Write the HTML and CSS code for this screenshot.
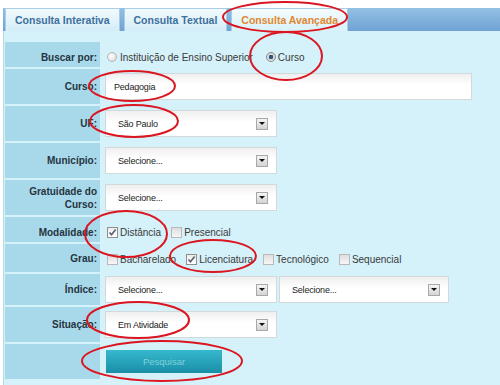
FILE: index.html
```html
<!DOCTYPE html>
<html lang="pt-BR">

<head>
  <meta charset="UTF-8" />
  <title>Consulta Avançada</title>
  <link rel="stylesheet" href="styles.css">
</head>

<body>
  <div class="page">
    <ul class="tabs">
      <li class="tab">Consulta Interativa</li>
      <li class="tab">Consulta Textual</li>
      <li class="tab tab-active">Consulta Avançada</li>
    </ul>

    <form class="panel">
      <div class="row row-low">
        <div class="label">Buscar por:</div>
        <div class="field field-opts">
          <span class="opt opt-wide"><span class="radio"></span>Instituição de Ensino Superior</span>
          <span class="opt"><span class="radio radio-on"></span>Curso</span>
        </div>
      </div>

      <div class="row">
        <div class="label">Curso:</div>
        <div class="field">
          <input class="input" type="text" value="Pedagogia" />
        </div>
      </div>

      <div class="row">
        <div class="label">UF:</div>
        <div class="field">
          <div class="select"><span>São Paulo</span><span class="select-arrow"></span></div>
        </div>
      </div>

      <div class="row">
        <div class="label">Município:</div>
        <div class="field">
          <div class="select"><span>Selecione...</span><span class="select-arrow"></span></div>
        </div>
      </div>

      <div class="row">
        <div class="label">Gratuidade do Curso:</div>
        <div class="field">
          <div class="select"><span>Selecione...</span><span class="select-arrow"></span></div>
        </div>
      </div>

      <div class="row row-low">
        <div class="label">Modalidade:</div>
        <div class="field field-opts">
          <span class="opt"><span class="check check-on"><svg viewBox="0 0 9 9"><path d="M1.5 4.5 L3.5 6.8 L7.6 1.6" /></svg></span>Distância</span>
          <span class="opt"><span class="check"></span>Presencial</span>
        </div>
      </div>

      <div class="row">
        <div class="label">Grau:</div>
        <div class="field field-opts field-grau">
          <span class="opt"><span class="check"></span>Bacharelado</span>
          <span class="opt"><span class="check check-on"><svg viewBox="0 0 9 9"><path d="M1.5 4.5 L3.5 6.8 L7.6 1.6" /></svg></span>Licenciatura</span>
          <span class="opt"><span class="check"></span>Tecnológico</span>
          <span class="opt"><span class="check"></span>Sequencial</span>
        </div>
      </div>

      <div class="row">
        <div class="label">Índice:</div>
        <div class="field field-pair">
          <div class="select"><span>Selecione...</span><span class="select-arrow"></span></div>
          <div class="select select-narrow"><span>Selecione...</span><span class="select-arrow"></span></div>
        </div>
      </div>

      <div class="row">
        <div class="label">Situação:</div>
        <div class="field">
          <div class="select"><span>Em Atividade</span><span class="select-arrow"></span></div>
        </div>
      </div>

      <div class="row">
        <div class="label"></div>
        <div class="field">
          <button class="btn" type="button">Pesquisar</button>
        </div>
      </div>
    </form>

    <!-- marcações em vermelho -->
    <svg class="marks" viewBox="0 0 500 385">
      <ellipse cx="285" cy="17" rx="62" ry="15" />
      <ellipse cx="286" cy="56" rx="36" ry="24" />
      <ellipse cx="132" cy="86" rx="43" ry="15" />
      <ellipse cx="134" cy="121" rx="44" ry="16" />
      <ellipse cx="126" cy="234" rx="41" ry="23" />
      <ellipse cx="213" cy="256" rx="43" ry="16" />
      <ellipse cx="138" cy="320" rx="51" ry="18" />
      <ellipse cx="162" cy="361" rx="80" ry="20" />
    </svg>
  </div>
</body>

</html>
```

FILE: styles.css
```css
* {
  box-sizing: border-box;
}

body {
  margin: 0;
  background: #fff;
  font-family: "Liberation Sans", Arial, sans-serif;
  font-size: 10px;
  color: #333;
}

.page {
  position: relative;
  width: 500px;
  height: 385px;
  overflow: hidden;
  display: flex;
  flex-direction: column;
  padding: 8px 0 0 3px;
}

/* Tabs */
.tabs {
  display: flex;
  gap: 4px;
  margin: 0;
  padding: 0 0 0 2px;
  list-style: none;
  height: 23px;
  background: linear-gradient(#93c0e4, #6fa3d3);
}

.tab {
  height: 23px;
  padding: 0 9px;
  line-height: 22px;
  font-size: 10.5px;
  font-weight: bold;
  color: #3d6f9c;
  background: linear-gradient(#f2fafd, #d3edf8);
  border: 1px solid #a9cde2;
  border-bottom: none;
}

.tab-active {
  color: #e2872e;
  background: linear-gradient(#f4fbfd, #d8f2fa);
}

/* Form */
.panel {
  flex: 1;
  margin: 0;
  padding: 11px 0 0 1px;
  background: #d5f1f9;
  border-left: 1px solid #b4dae8;
}

.row {
  display: grid;
  grid-template-columns: 95px 1fr;
  margin-bottom: 2px;
}

.label {
  display: flex;
  align-items: center;
  justify-content: flex-end;
  text-align: right;
  padding: 0 3px 0 8px;
  background: #a7d9ea;
  font-weight: bold;
  line-height: 13px;
  color: #26343f;
}

.field {
  display: flex;
  align-items: center;
  padding: 4px 0 4px 5px;
}

.field-opts {
  min-height: 25px;
  padding: 0 0 0 7px;
}

.row-low .label,
.row-low .field {
  padding-top: 5px;
}

.field-grau {
  min-height: 28px;
  padding-top: 3px;
}

.field-pair {
  gap: 2px;
  padding: 2px 0 2px 5px;
}

.opt {
  display: flex;
  align-items: center;
  gap: 2px;
  margin-right: 10px;
  color: #3a3a3a;
}

.opt-wide {
  margin-right: 13px;
  gap: 3px;
}

.radio {
  width: 10px;
  height: 10px;
  border-radius: 50%;
  border: 1px solid #b8b8b8;
  background: radial-gradient(circle at 40% 40%, #fff, #d4d4d4);
}

.radio-on {
  border-color: #8c8c8c;
  background: radial-gradient(circle, #2f557f 0, #2f557f 2px, #dadada 2.5px);
}

.check {
  display: flex;
  width: 11px;
  height: 11px;
  border: 1px solid #b9b9b9;
  background: linear-gradient(#dedede, #f7f7f7);
}

.check-on {
  border-color: #8f8f8f;
  background: linear-gradient(#ececec, #fff);
}

.check svg {
  width: 9px;
  height: 9px;
  fill: none;
  stroke: #5a6270;
  stroke-width: 1.6;
}

.input,
.select {
  height: 27px;
  border: 1px solid #d2d9dc;
  background: linear-gradient(#efefef, #fff 45%);
  font-family: "Liberation Sans", Arial, sans-serif;
  font-size: 9px;
  letter-spacing: -0.2px;
  color: #222;
}

.input {
  width: 367px;
  padding: 0 8px;
  outline: none;
}

.select {
  display: flex;
  align-items: center;
  justify-content: space-between;
  width: 172px;
  padding: 0 8px 0 12px;
}

.select-narrow {
  width: 170px;
}

.select-arrow {
  display: flex;
  align-items: center;
  justify-content: center;
  width: 12px;
  height: 12px;
  border: 1px solid #a8a8a8;
  background: linear-gradient(#f5f5f5, #d3d3d3);
}

.select-arrow::after {
  content: "";
  border-left: 3px solid transparent;
  border-right: 3px solid transparent;
  border-top: 3px solid #111;
}

.btn {
  width: 116px;
  height: 23px;
  margin: 2px 0 2px 1px;
  border: none;
  background: linear-gradient(#36b8cd, #1a8fa7);
  color: #7fd0dc;
  font-family: "Liberation Sans", Arial, sans-serif;
  font-size: 9.5px;
  cursor: pointer;
}

/* Marcações */
.marks {
  position: absolute;
  left: 0;
  top: 0;
  width: 500px;
  height: 385px;
  pointer-events: none;
  fill: none;
  stroke: #dc1620;
  stroke-width: 2;
}
```
